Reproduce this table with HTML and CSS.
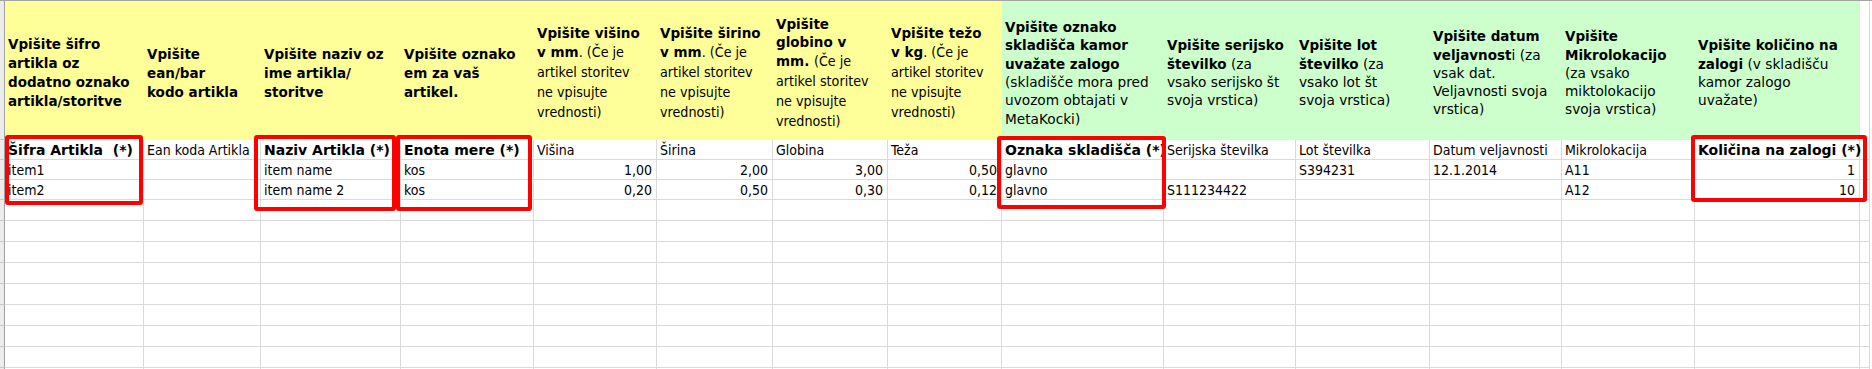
FILE: index.html
```html
<!DOCTYPE html>
<html lang="sl">
<head>
<meta charset="utf-8">
<title>Uvoz zaloge</title>
<link rel="stylesheet" href="styles.css">
</head>
<body>
<div class="sheet">
  <div class="topline"></div>

  <div class="row hrow">
    <div class="gut"></div>
    <div class="h y"><div>Vpišite šifro<br>artikla oz<br>dodatno oznako<br>artikla/storitve</div></div>
    <div class="h y"><div>Vpišite<br>ean/bar<br>kodo artikla</div></div>
    <div class="h y"><div>Vpišite naziv oz<br>ime artikla/<br>storitve</div></div>
    <div class="h y"><div>Vpišite oznako<br>em za vaš<br>artikel.</div></div>
    <div class="h ym"><div>Vpišite višino<br>v mm<span class="n">. (Če je<br>artikel storitev<br>ne vpisujte<br>vrednosti)</span></div></div>
    <div class="h ym"><div>Vpišite širino<br>v mm<span class="n">. (Če je<br>artikel storitev<br>ne vpisujte<br>vrednosti)</span></div></div>
    <div class="h ym"><div>Vpišite<br>globino v<br>mm. <span class="n">(Če je<br>artikel storitev<br>ne vpisujte<br>vrednosti)</span></div></div>
    <div class="h ym"><div>Vpišite težo<br>v kg<span class="n">. (Če je<br>artikel storitev<br>ne vpisujte<br>vrednosti)</span></div></div>
    <div class="h g"><div>Vpišite oznako<br>skladišča kamor<br>uvažate zalogo<br><span class="n">(skladišče mora pred<br>uvozom obtajati v<br>MetaKocki)</span></div></div>
    <div class="h g"><div>Vpišite serijsko<br>številko<span class="n"> (za<br>vsako serijsko št<br>svoja vrstica)</span></div></div>
    <div class="h g"><div>Vpišite lot<br>številko<span class="n"> (za<br>vsako lot št<br>svoja vrstica)</span></div></div>
    <div class="h g"><div>Vpišite datum<br>veljavnost<span class="n">i (za<br>vsak dat.<br>Veljavnosti svoja<br>vrstica)</span></div></div>
    <div class="h g"><div>Vpišite<br>Mikrolokacijo<br><span class="n">(za vsako<br>miktolokacijo<br>svoja vrstica)</span></div></div>
    <div class="h g"><div>Vpišite količino na<br>zalogi<span class="n"> (v skladišču<br>kamor zalogo<br>uvažate)</span></div></div>
    <div class="o hcell"></div>
    <div class="fill"></div>
  </div>

  <div class="row r20">
    <div class="gut"></div>
    <div class="c b">Šifra Artikla  (*)</div>
    <div class="c">Ean koda Artikla</div>
    <div class="c b">Naziv Artikla (*)</div>
    <div class="c b">Enota mere (*)</div>
    <div class="c">Višina</div>
    <div class="c">Širina</div>
    <div class="c">Globina</div>
    <div class="c">Teža</div>
    <div class="c b">Oznaka skladišča (*)</div>
    <div class="c">Serijska številka</div>
    <div class="c">Lot številka</div>
    <div class="c">Datum veljavnosti</div>
    <div class="c">Mikrolokacija</div>
    <div class="c b ov">Količina na zalogi (*)</div>
    <div class="o"></div>
    <div class="fill"></div>
  </div>

  <div class="row r20">
    <div class="gut"></div>
    <div class="c">item1</div>
    <div class="c"></div>
    <div class="c">item name</div>
    <div class="c">kos</div>
    <div class="c num">1,00</div>
    <div class="c num">2,00</div>
    <div class="c num">3,00</div>
    <div class="c num">0,50</div>
    <div class="c">glavno</div>
    <div class="c"></div>
    <div class="c">S394231</div>
    <div class="c">12.1.2014</div>
    <div class="c">A11</div>
    <div class="c num">1</div>
    <div class="o"></div>
    <div class="fill"></div>
  </div>

  <div class="row r20">
    <div class="gut"></div>
    <div class="c">item2</div>
    <div class="c"></div>
    <div class="c">item name 2</div>
    <div class="c">kos</div>
    <div class="c num">0,20</div>
    <div class="c num">0,50</div>
    <div class="c num">0,30</div>
    <div class="c num">0,12</div>
    <div class="c">glavno</div>
    <div class="c">S111234422</div>
    <div class="c"></div>
    <div class="c"></div>
    <div class="c">A12</div>
    <div class="c num">10</div>
    <div class="o"></div>
    <div class="fill"></div>
  </div>

  <div class="row r21"><div class="gut"></div><div class="c"></div><div class="c"></div><div class="c"></div><div class="c"></div><div class="c"></div><div class="c"></div><div class="c"></div><div class="c"></div><div class="c"></div><div class="c"></div><div class="c"></div><div class="c"></div><div class="c"></div><div class="c"></div><div class="o"></div><div class="fill"></div></div>
  <div class="row r21"><div class="gut"></div><div class="c"></div><div class="c"></div><div class="c"></div><div class="c"></div><div class="c"></div><div class="c"></div><div class="c"></div><div class="c"></div><div class="c"></div><div class="c"></div><div class="c"></div><div class="c"></div><div class="c"></div><div class="c"></div><div class="o"></div><div class="fill"></div></div>
  <div class="row r21"><div class="gut"></div><div class="c"></div><div class="c"></div><div class="c"></div><div class="c"></div><div class="c"></div><div class="c"></div><div class="c"></div><div class="c"></div><div class="c"></div><div class="c"></div><div class="c"></div><div class="c"></div><div class="c"></div><div class="c"></div><div class="o"></div><div class="fill"></div></div>
  <div class="row r21"><div class="gut"></div><div class="c"></div><div class="c"></div><div class="c"></div><div class="c"></div><div class="c"></div><div class="c"></div><div class="c"></div><div class="c"></div><div class="c"></div><div class="c"></div><div class="c"></div><div class="c"></div><div class="c"></div><div class="c"></div><div class="o"></div><div class="fill"></div></div>
  <div class="row r21"><div class="gut"></div><div class="c"></div><div class="c"></div><div class="c"></div><div class="c"></div><div class="c"></div><div class="c"></div><div class="c"></div><div class="c"></div><div class="c"></div><div class="c"></div><div class="c"></div><div class="c"></div><div class="c"></div><div class="c"></div><div class="o"></div><div class="fill"></div></div>
  <div class="row r21"><div class="gut"></div><div class="c"></div><div class="c"></div><div class="c"></div><div class="c"></div><div class="c"></div><div class="c"></div><div class="c"></div><div class="c"></div><div class="c"></div><div class="c"></div><div class="c"></div><div class="c"></div><div class="c"></div><div class="c"></div><div class="o"></div><div class="fill"></div></div>
  <div class="row r21"><div class="gut"></div><div class="c"></div><div class="c"></div><div class="c"></div><div class="c"></div><div class="c"></div><div class="c"></div><div class="c"></div><div class="c"></div><div class="c"></div><div class="c"></div><div class="c"></div><div class="c"></div><div class="c"></div><div class="c"></div><div class="o"></div><div class="fill"></div></div>
  <div class="row r21"><div class="gut"></div><div class="c"></div><div class="c"></div><div class="c"></div><div class="c"></div><div class="c"></div><div class="c"></div><div class="c"></div><div class="c"></div><div class="c"></div><div class="c"></div><div class="c"></div><div class="c"></div><div class="c"></div><div class="c"></div><div class="o"></div><div class="fill"></div></div>
  <div class="row r21"><div class="gut"></div><div class="c"></div><div class="c"></div><div class="c"></div><div class="c"></div><div class="c"></div><div class="c"></div><div class="c"></div><div class="c"></div><div class="c"></div><div class="c"></div><div class="c"></div><div class="c"></div><div class="c"></div><div class="c"></div><div class="o"></div><div class="fill"></div></div>

  <div class="mark m1"></div>
  <div class="mark m2"></div>
  <div class="mark m3"></div>
  <div class="mark m4"></div>
  <div class="mark m5"></div>
</div>
</body>
</html>
```

FILE: styles.css
```css
* {
  box-sizing: border-box;
  margin: 0;
  padding: 0;
}

html, body {
  background: #ffffff;
}

body {
  margin: 0;
  font-family: "DejaVu Sans", "Liberation Sans", sans-serif;
  color: #000000;
}

.sheet {
  position: relative;
  width: 1872px;
  height: 369px;
  overflow: hidden;
  background: #ffffff;
}

.topline {
  height: 1px;
  background: #a3a3a3;
}

.row {
  display: grid;
  grid-template-columns: 5px 139px 117px 140px 133px 123px 116px 115px 114px 162px 132px 134px 132px 133px 165px 10px 2px;
}

.hrow { height: 139px; }
.r20 { height: 20px; }
.r21 { height: 21px; }

.gut {
  background: #ececec;
  border-right: 1px solid #a0a0a0;
  border-bottom: 1px solid #c6c6c6;
}

.fill {
  background: #ffffff;
}

.o {
  border-right: 1px solid #dadada;
  border-bottom: 1px solid #dadada;
}

.o.hcell {
  border-bottom: none;
}

/* header cells */
.h {
  display: flex;
  align-items: center;
  padding: 5px 2px 0 3px;
  white-space: nowrap;
  overflow: hidden;
  font-weight: 700;
  font-size: 13.5px;
}

.h.y {
  background: #ffff99;
  line-height: 19px;
}

.h.ym {
  background: #ffff99;
  line-height: 18px;
}

.h.g {
  background: #ccffcc;
  line-height: 18.3px;
}

.h .n {
  font-weight: 400;
}

.h.ym .n {
  font-family: "DejaVu Sans Condensed", "DejaVu Sans", sans-serif;
  font-stretch: condensed;
  font-size: 14.2px;
  line-height: 20px;
}

.h.g .n {
  font-size: 13.7px;
}

/* data cells */
.c {
  display: flex;
  align-items: flex-end;
  padding: 0 3px 1px 3px;
  border-right: 1px solid #dadada;
  border-bottom: 1px solid #dadada;
  white-space: pre;
  overflow: hidden;
  font-family: "DejaVu Sans Condensed", "DejaVu Sans", sans-serif;
  font-stretch: condensed;
  font-size: 14px;
  line-height: 15px;
}

.c.b {
  font-family: "DejaVu Sans", sans-serif;
  font-stretch: normal;
  font-weight: 700;
  font-size: 14px;
}

.c.num {
  justify-content: flex-end;
  padding-right: 4px;
}

.c.ov {
  overflow: visible;
}

/* red highlight frames laid over the sheet */
.mark {
  position: absolute;
  border: 4px solid #ff0000;
  border-radius: 3px;
}

.m1 { left: 5px;    top: 135px; width: 138px; height: 70px; }
.m2 { left: 254px;  top: 135px; width: 142px; height: 76px; }
.m3 { left: 396px;  top: 135px; width: 136px; height: 76px; }
.m4 { left: 997px;  top: 136px; width: 169px; height: 73px; }
.m5 { left: 1691px; top: 135px; width: 176px; height: 67px; }
```
